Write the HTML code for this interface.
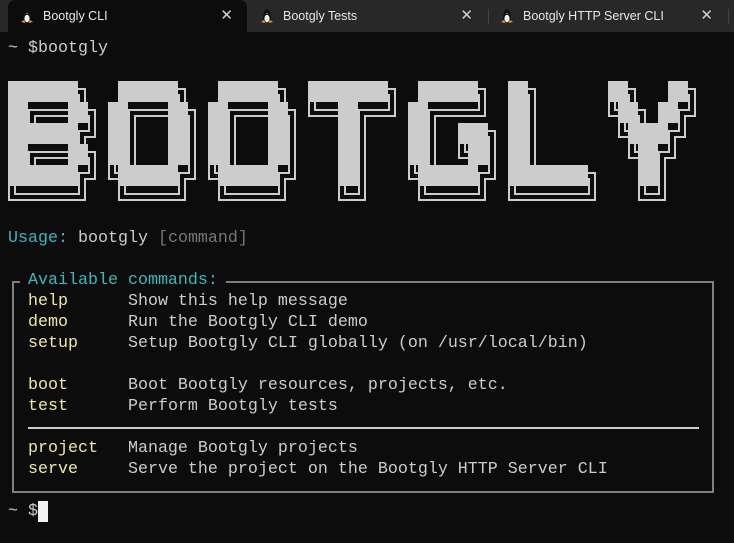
<!DOCTYPE html>
<html><head><meta charset="utf-8"><style>
*{margin:0;padding:0;box-sizing:border-box}
body{width:734px;height:543px;background:#0c0c0c;overflow:hidden;position:relative;font-family:"Liberation Mono","DejaVu Sans Mono",monospace;font-size:16.67px;color:#cccccc}
#bar{position:absolute;left:0;top:0;width:734px;height:32px;background:#282828}
.tab{position:absolute;top:0;height:32px;font-family:"Liberation Sans","DejaVu Sans",sans-serif;font-size:12.5px;color:#e8e8e8;line-height:32px}
.tab.active{background:#0c0c0c;border-radius:7px 7px 0 0}
.tab .t{position:absolute;left:35px;top:0}
.tab .x{position:absolute;right:14px;top:0;font-size:15px;color:#cfcfcf}
.tab svg{position:absolute;left:11px;top:8px}
.sep{position:absolute;top:9px;width:1px;height:15px;background:#444}
.ln{position:absolute;left:8px;height:21px;line-height:21px;white-space:pre}
.c{color:#3ab8bd}.y{color:#f0e8a0}.g{color:#767676}
#box{position:absolute;left:12px;top:281px;width:702px;height:212px;border:2px solid #7f7f7f}
#hr{position:absolute;left:28px;top:427px;width:671px;height:2px;background:#cccccc}
#cur{position:absolute;left:38px;top:501px;width:10px;height:21px;background:#f2f2f2}
</style></head><body>
<div id="bar"></div>
<div class="tab active" style="left:8px;width:239px"><svg width="16" height="16" viewBox="0 0 16 16"><ellipse cx="8" cy="9" rx="4" ry="5.5" fill="#111"/><ellipse cx="8" cy="10.5" rx="2.6" ry="3.8" fill="#eee"/><circle cx="8" cy="4" r="2.8" fill="#111"/><path d="M2 14 L5 12 L6.5 15 Z M14 14 L11 12 L9.5 15 Z" fill="#e0a000"/><path d="M7 5 L9 5 L8 6.3Z" fill="#e0a000"/></svg><span class="t">Bootgly CLI</span><span class="x">✕</span></div>
<div class="tab" style="left:248px;width:239px"><svg width="16" height="16" viewBox="0 0 16 16"><ellipse cx="8" cy="9" rx="4" ry="5.5" fill="#111"/><ellipse cx="8" cy="10.5" rx="2.6" ry="3.8" fill="#eee"/><circle cx="8" cy="4" r="2.8" fill="#111"/><path d="M2 14 L5 12 L6.5 15 Z M14 14 L11 12 L9.5 15 Z" fill="#e0a000"/><path d="M7 5 L9 5 L8 6.3Z" fill="#e0a000"/></svg><span class="t">Bootgly Tests</span><span class="x">✕</span></div>
<div class="sep" style="left:488px"></div>
<div class="tab" style="left:488px;width:239px"><svg width="16" height="16" viewBox="0 0 16 16"><ellipse cx="8" cy="9" rx="4" ry="5.5" fill="#111"/><ellipse cx="8" cy="10.5" rx="2.6" ry="3.8" fill="#eee"/><circle cx="8" cy="4" r="2.8" fill="#111"/><path d="M2 14 L5 12 L6.5 15 Z M14 14 L11 12 L9.5 15 Z" fill="#e0a000"/><path d="M7 5 L9 5 L8 6.3Z" fill="#e0a000"/></svg><span class="t">Bootgly HTTP Server CLI</span><span class="x">✕</span></div>
<div class="sep" style="left:728px"></div>

<div class="ln" style="top:38px">~ $bootgly</div>

<svg style="position:absolute;left:0;top:0" width="734" height="543">
<defs>
<filter id="d4" x="-20%" y="-20%" width="140%" height="140%"><feMorphology operator="dilate" radius="4"/></filter>
<filter id="d2" x="-20%" y="-20%" width="140%" height="140%"><feMorphology operator="dilate" radius="2"/></filter>
<filter id="e2" x="-20%" y="-20%" width="140%" height="140%"><feMorphology operator="erode" radius="2"/></filter>
<filter id="e4" x="-20%" y="-20%" width="140%" height="140%"><feMorphology operator="erode" radius="4"/></filter>
<g id="B"><rect x="0" y="0" width="70" height="21"/><rect x="0" y="21" width="20" height="21"/><rect x="60" y="21" width="20" height="21"/><rect x="0" y="42" width="70" height="21"/><rect x="0" y="63" width="20" height="21"/><rect x="60" y="63" width="20" height="21"/><rect x="0" y="84" width="70" height="21"/></g>
<g id="O"><rect x="10" y="0" width="60" height="21"/><rect x="0" y="21" width="20" height="63"/><rect x="60" y="21" width="20" height="63"/><rect x="10" y="84" width="60" height="21"/></g>
<g id="T"><rect x="0" y="0" width="80" height="21"/><rect x="30" y="21" width="20" height="84"/></g>
<g id="G"><rect x="10" y="0" width="60" height="21"/><rect x="0" y="21" width="20" height="63"/><rect x="50" y="42" width="30" height="21"/><rect x="60" y="63" width="20" height="21"/><rect x="10" y="84" width="60" height="21"/></g>
<g id="L"><rect x="0" y="0" width="20" height="84"/><rect x="0" y="84" width="80" height="21"/></g>
<g id="Y"><rect x="0" y="0" width="20" height="21"/><rect x="60" y="0" width="20" height="21"/><rect x="10" y="21" width="20" height="21"/><rect x="50" y="21" width="20" height="21"/><rect x="20" y="42" width="40" height="21"/><rect x="30" y="63" width="20" height="42"/></g>
</defs>
<g transform="translate(12,92)">
 <g fill="#cccccc" filter="url(#d4)"><use href="#B" x="0"/><use href="#O" x="100"/><use href="#O" x="200"/><use href="#T" x="300"/><use href="#G" x="400"/><use href="#L" x="500"/><use href="#Y" x="600"/></g>
 <g fill="#0c0c0c" filter="url(#d2)"><use href="#B" x="0"/><use href="#O" x="100"/><use href="#O" x="200"/><use href="#T" x="300"/><use href="#G" x="400"/><use href="#L" x="500"/><use href="#Y" x="600"/></g>
 <g fill="#cccccc" filter="url(#e2)"><use href="#B" x="0"/><use href="#O" x="100"/><use href="#O" x="200"/><use href="#T" x="300"/><use href="#G" x="400"/><use href="#L" x="500"/><use href="#Y" x="600"/></g>
 <g fill="#0c0c0c" filter="url(#e4)"><use href="#B" x="0"/><use href="#O" x="100"/><use href="#O" x="200"/><use href="#T" x="300"/><use href="#G" x="400"/><use href="#L" x="500"/><use href="#Y" x="600"/></g>
</g>
<g transform="translate(8,81)" fill="#cccccc"><use href="#B" x="0"/><use href="#O" x="100"/><use href="#O" x="200"/><use href="#T" x="300"/><use href="#G" x="400"/><use href="#L" x="500"/><use href="#Y" x="600"/></g>
</svg>

<div class="ln" style="top:228px"><span class="c">Usage:</span> bootgly <span class="g">[command]</span></div>
<div id="box"></div>
<div class="ln" style="top:270px;left:20px;background:#0c0c0c;padding:0 8px"><span class="c">Available commands:</span></div>
<div class="ln" style="top:291px;left:28px"><span class="y">help</span>      Show this help message</div>
<div class="ln" style="top:312px;left:28px"><span class="y">demo</span>      Run the Bootgly CLI demo</div>
<div class="ln" style="top:333px;left:28px"><span class="y">setup</span>     Setup Bootgly CLI globally (on /usr/local/bin)</div>
<div class="ln" style="top:375px;left:28px"><span class="y">boot</span>      Boot Bootgly resources, projects, etc.</div>
<div class="ln" style="top:396px;left:28px"><span class="y">test</span>      Perform Bootgly tests</div>
<div id="hr"></div>
<div class="ln" style="top:438px;left:28px"><span class="y">project</span>   Manage Bootgly projects</div>
<div class="ln" style="top:459px;left:28px"><span class="y">serve</span>     Serve the project on the Bootgly HTTP Server CLI</div>
<div class="ln" style="top:501px">~ $</div>
<div id="cur"></div>
</body></html>
